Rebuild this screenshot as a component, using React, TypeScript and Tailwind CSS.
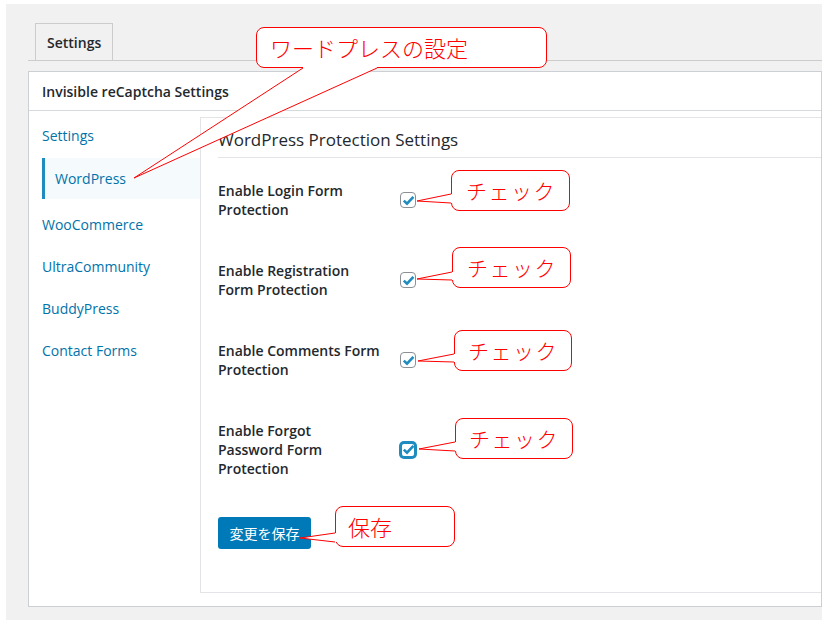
import React from 'react';

const UI = "font-['Open_Sans','Noto_Sans_CJK_JP',sans-serif]";
const JP = "font-['Noto_Sans_CJK_JP','Noto_Sans',sans-serif]";

const navItems = ['Settings', 'WordPress', 'WooCommerce', 'UltraCommunity', 'BuddyPress', 'Contact Forms'];

const rows = [
  { lines: ['Enable Login Form', 'Protection'], focus: false },
  { lines: ['Enable Registration', 'Form Protection'], focus: false },
  { lines: ['Enable Comments Form', 'Protection'], focus: false },
  { lines: ['Enable Forgot', 'Password Form', 'Protection'], focus: true },
];

const Checkbox: React.FC<{ focus?: boolean }> = ({ focus }) => (
  <span
    className={
      focus
        ? 'w-4 h-4 rounded-[4px] bg-white border-2 border-[#1e8cbe] shadow-[0_0_0_1px_#1e8cbe] flex items-center justify-center'
        : 'w-4 h-4 rounded-[4px] bg-white border border-[#8c8f94] flex items-center justify-center'
    }
  >
    <svg width="13" height="13" viewBox="0 0 13 13" className="shrink-0">
      <path d="M1.8 6.6 L5 9.7 L11.4 2.8" fill="none" stroke="#1e8cbe" strokeWidth="2.6" strokeLinejoin="miter" />
    </svg>
  </span>
);

// speech bubbles that lie over the page
const bubbles = [
  { text: 'ワードプレスの設定', cls: 'left-[256px] top-[27px] w-[291px] h-[41px] pl-[13px] text-[22px]' },
  { text: 'チェック', cls: 'left-[451px] top-[170px] w-[119px] h-[41px] pl-[14px] text-[21px] tracking-[1.5px]' },
  { text: 'チェック', cls: 'left-[452px] top-[247px] w-[119px] h-[41px] pl-[14px] text-[21px] tracking-[1.5px]' },
  { text: 'チェック', cls: 'left-[454px] top-[330px] w-[118px] h-[41px] pl-[13px] text-[21px] tracking-[1.5px]' },
  { text: 'チェック', cls: 'left-[455px] top-[418px] w-[118px] h-[41px] pl-[13px] text-[21px] tracking-[1.5px]' },
  { text: '保存', cls: 'left-[335px] top-[506px] w-[120px] h-[41px] pl-[12px] text-[22px]' },
];

// tip, two base points on the bubble edge, and an offset into the bubble to hide its border
const tails: { tip: [number, number]; a: [number, number]; b: [number, number]; cover: [number, number] }[] = [
  { tip: [134, 178], a: [303, 68], b: [377, 68], cover: [0, -2] },
  { tip: [417, 201], a: [451, 194], b: [451, 203], cover: [2, 0] },
  { tip: [417, 279], a: [452, 272], b: [452, 280], cover: [2, 0] },
  { tip: [418, 361], a: [454, 354], b: [454, 362], cover: [2, 0] },
  { tip: [419, 449], a: [455, 442], b: [455, 451], cover: [2, 0] },
  { tip: [300, 538], a: [335, 533], b: [335, 542], cover: [2, 0] },
];

const Tails: React.FC = () => (
  <svg className="absolute left-0 top-0 pointer-events-none" width="837" height="620" viewBox="0 0 837 620">
    {tails.map((t, i) => {
      const [dx, dy] = t.cover;
      const pts = `${t.tip[0]},${t.tip[1]} ${t.a[0]},${t.a[1]} ${t.a[0] + dx},${t.a[1] + dy} ${t.b[0] + dx},${t.b[1] + dy} ${t.b[0]},${t.b[1]}`;
      return (
        <g key={i}>
          <polygon points={pts} fill="#ffffff" />
          <line x1={t.tip[0]} y1={t.tip[1]} x2={t.a[0]} y2={t.a[1]} stroke="#ff0000" strokeWidth="1" />
          <line x1={t.tip[0]} y1={t.tip[1]} x2={t.b[0]} y2={t.b[1]} stroke="#ff0000" strokeWidth="1" />
        </g>
      );
    })}
  </svg>
);

const App: React.FC = () => {
  return (
    <div className={`w-[837px] h-[620px] bg-white relative overflow-hidden ${UI}`}>
      <div className="ml-[6px] mt-[4px] w-[816px] h-[616px] bg-[#f1f1f1] pt-[19px] pl-[22px]">
        {/* tabs */}
        <div className="flex items-end border-b border-[#cccccc]">
          <div className="ml-[7px] h-[37px] px-[11px] border border-b-0 border-[#cccccc] bg-[#f1f1f1] flex items-center text-[14px] font-semibold text-[#23282d]">
            Settings
          </div>
        </div>

        {/* settings box */}
        <div className="mt-[10px] w-[794px] bg-white border border-[#ccd0d4]">
          <div className="h-[39px] pl-[13px] border-b border-[#d5dadf] flex items-center text-[14px] font-semibold text-[#23282d]">
            Invisible reCaptcha Settings
          </div>

          <div className="flex h-[495px]">
            <nav className="w-[171px] shrink-0 pt-[3px] flex flex-col">
              {navItems.map((item) =>
                item === 'WordPress' ? (
                  <div
                    key={item}
                    className="mt-[2px] mb-[4px] ml-[13px] h-[41px] border-l-[3px] border-[#1e8cbe] bg-[#f5fafd] pl-[10px] flex items-center text-[14px] text-[#0073aa]"
                  >
                    {item}
                  </div>
                ) : (
                  <div key={item} className="h-[42px] pl-[13px] flex items-center text-[14px] text-[#0073aa]">
                    {item}
                  </div>
                )
              )}
            </nav>

            <section className="flex-1 mt-[6px] mb-[13px] border-t border-l border-b border-[#e2e4e7] flex flex-col">
              <div className="ml-[17px] h-[40px] pt-[10px] border-b border-[#e2e4e7] text-[17px] leading-[23px] text-[#23282d]">
                WordPress Protection Settings
              </div>

              <div className="pl-[17px] flex flex-col">
                {rows.map((r) => (
                  <div key={r.lines.join(' ')} className="flex items-center pt-[23px] pb-[19px]">
                    <div className="w-[170px] mr-[12px] text-[14px] leading-[19px] font-semibold text-[#23282d]">
                      {r.lines.map((l) => (
                        <div key={l}>{l}</div>
                      ))}
                    </div>
                    <Checkbox focus={r.focus} />
                  </div>
                ))}

                <div className="mt-[20px]">
                  <button className={`h-[32px] w-[93px] rounded-[3px] bg-[#0079b8] text-white text-[14px] ${JP}`}>
                    変更を保存
                  </button>
                </div>
              </div>
            </section>
          </div>
        </div>
      </div>

      {bubbles.map((b, i) => (
        <div
          key={i}
          className={`absolute ${b.cls} bg-white border border-[#ff0000] rounded-[8px] flex items-center font-light text-[#ff0000] ${JP}`}
        >
          {b.text}
        </div>
      ))}
      <Tails />
    </div>
  );
};

export default App;
